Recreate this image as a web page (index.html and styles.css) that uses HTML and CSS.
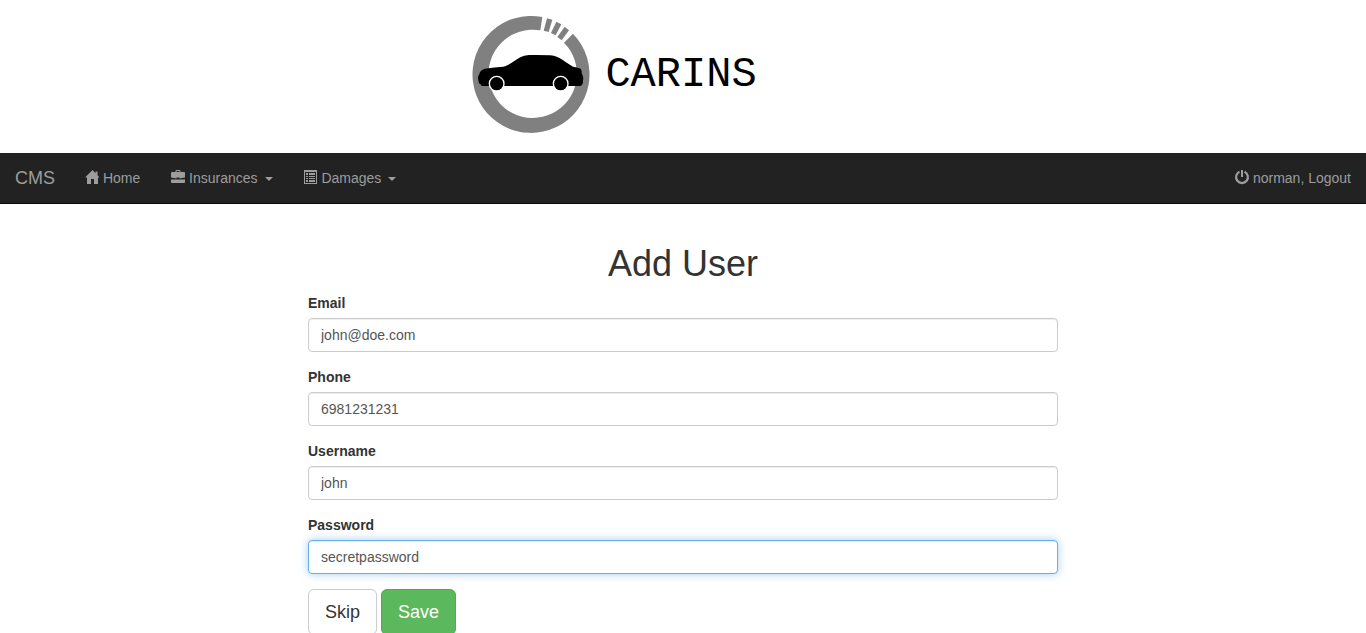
FILE: index.html
```html
<!DOCTYPE html>
<html lang="en">
<head>
<meta charset="utf-8">
<meta name="viewport" content="width=device-width, initial-scale=1">
<title>CMS - Add User</title>
<link rel="stylesheet" href="styles.css">
</head>
<body>
<header class="masthead">
  <svg class="logo-mark" viewBox="21 21 357 357" role="img" aria-label="Carins logo">
    <g fill="#808080">
      <path d="M232 27A175.500 175.500 0 1 0 324 77L297 104A132.500 132.500 0 1 1 226 67Z"/>
      <path d="M246 31L262 35L251 72L236 68Z"/>
      <path d="M274 41L289 49L272 82L258 75Z"/>
      <path d="M299 56L312 67L290 97L277 87Z"/>
    </g>
    <path d="M50 234Q49 229 42 226L39 212Q39 203 43 199Q44 187 60 182Q90 178 115 176C135 172 150 156 166 148Q176 142 192 141Q222 140 256 142C285 145 298 162 324 176Q336 178 347 182Q351 188 350 196Q354 202 355 213Q353 219 354 224Q352 232 346 234Z"/>
    <g stroke="#fff" stroke-width="4">
      <circle cx="95" cy="227" r="22"/>
      <circle cx="287" cy="227" r="22"/>
    </g>
  </svg>
  <span class="logo-name">CARINS</span>
</header>

<nav class="navbar" aria-label="Main">
  <a class="brand" href="#">CMS</a>
  <a class="nav-link" href="#"><svg class="icon" viewBox="0 0 14 14"><path d="M7.500 0L0 7.500H2V14H6V9H9V14H13V7.500H14.500L12.500 5.200V1.500H10.500V3.200Z"/></svg> Home</a>
  <a class="nav-link" href="#"><svg class="icon" viewBox="0 0 14 14"><path fill-rule="evenodd" d="M4.500 2V1Q4.500 0 5.500 0H8.500Q9.500 0 9.500 1V2H13Q14 2 14 3V7.500L8.500 8.500V7.500H5.500V8.500L0 7.500V3Q0 2 1 2ZM5.500 2H8.500V1H5.500ZM0 9.500H14V12Q14 13 13 13H1Q0 13 0 12Z"/></svg> Insurances <span class="caret"></span></a>
  <a class="nav-link" href="#"><svg class="icon" viewBox="0 0 14 14"><path fill-rule="evenodd" d="M0 0H13V14H0ZM1 2V13H12V2Z"/><path d="M2 3H4V5H2ZM5 3H11V5H5ZM2 6H4V7H2ZM5 6H11V7H5ZM2 8H4V9H2ZM5 8H11V9H5ZM2 10H4V12H2ZM5 10H11V12H5Z"/></svg> Damages <span class="caret"></span></a>
  <a class="nav-link nav-user" href="#"><svg class="icon" viewBox="0 0 14 14"><path d="M6 0H8V7H6Z"/><path d="M4.500 1.800A5.900 5.900 0 1 0 9.500 1.800" fill="none" stroke="currentColor" stroke-width="2.200"/></svg> norman, Logout</a>
</nav>

<main class="container">
  <h1 class="title">Add User</h1>
  <form class="user-form">
    <div class="form-group">
      <label class="label" for="email">Email</label>
      <input class="control" id="email" type="text" value="john@doe.com">
    </div>
    <div class="form-group">
      <label class="label" for="phone">Phone</label>
      <input class="control" id="phone" type="text" value="6981231231">
    </div>
    <div class="form-group">
      <label class="label" for="username">Username</label>
      <input class="control" id="username" type="text" value="john" autocomplete="off">
    </div>
    <div class="form-group">
      <label class="label" for="password">Password</label>
      <input class="control" id="password" type="text" value="secretpassword" autocomplete="off">
    </div>
    <div class="actions">
      <button class="btn btn-default" type="button">Skip</button>
      <button class="btn btn-success" type="submit">Save</button>
    </div>
  </form>
</main>
<script src="form.js"></script>
</body>
</html>
```
FILE: styles.css
```css
*, *::before, *::after { box-sizing: border-box; }
body {
  margin: 0;
  background: #fff;
  color: #333;
  font: 14px/20px "Liberation Sans", Arial, sans-serif;
}
.masthead {
  display: flex;
  align-items: center;
  justify-content: center;
  gap: 14px;
  padding: 15px 137px 19px 0;
}
.logo-mark { width: 119px; height: 119px; }
.logo-name {
  color: #000;
  font: 42px/48px "Liberation Mono", monospace;
}
.navbar {
  display: flex;
  flex-wrap: wrap;
  background: #222;
  border-bottom: 1px solid #080808;
}
.brand, .nav-link {
  padding: 15px;
  color: #9d9d9d;
  text-decoration: none;
}
.brand { font-size: 18px; }
.nav-link + .nav-link { margin-left: 1px; }
.nav-link + .nav-user { margin-left: auto; }
.brand:hover, .nav-link:hover { color: #fff; }
.icon {
  width: 14px;
  height: 14px;
  overflow: visible;
  fill: currentColor;
  vertical-align: -1px;
}
.caret {
  display: inline-block;
  margin-left: 3px;
  vertical-align: middle;
  border-top: 4px solid;
  border-right: 4px solid transparent;
  border-left: 4px solid transparent;
}
.container {
  max-width: 780px;
  margin: 20px auto 0;
  padding: 0 15px;
}
.title {
  margin: 0 0 8px;
  padding-top: 19px;
  font-size: 36px;
  font-weight: 400;
  line-height: 42px;
  text-align: center;
}
.form-group { margin-bottom: 15px; }
.label {
  display: block;
  margin-bottom: 5px;
  font-weight: 700;
}
.control {
  display: block;
  width: 100%;
  height: 34px;
  padding: 6px 12px;
  border: 1px solid #ccc;
  border-radius: 4px;
  background: #fff;
  box-shadow: inset 0 1px 1px rgba(0, 0, 0, .075);
  color: #555;
  font: inherit;
}
.control:focus {
  border-color: #66afe9;
  outline: 0;
  box-shadow: inset 0 1px 1px rgba(0, 0, 0, .075), 0 0 8px rgba(102, 175, 233, .6);
}
.actions { display: flex; gap: 4px; }
.btn {
  padding: 10px 16px;
  border: 1px solid;
  border-radius: 6px;
  font: 18px/24px "Liberation Sans", Arial, sans-serif;
  cursor: pointer;
}
.btn-default { background: #fff; border-color: #ccc; color: #333; }
.btn-success { background: #5cb85c; border-color: #4cae4c; color: #fff; }
```
FILE: form.js
```js
const field = document.getElementById("password");
field.focus({ preventScroll: true });
field.setSelectionRange(field.value.length, field.value.length);
```
